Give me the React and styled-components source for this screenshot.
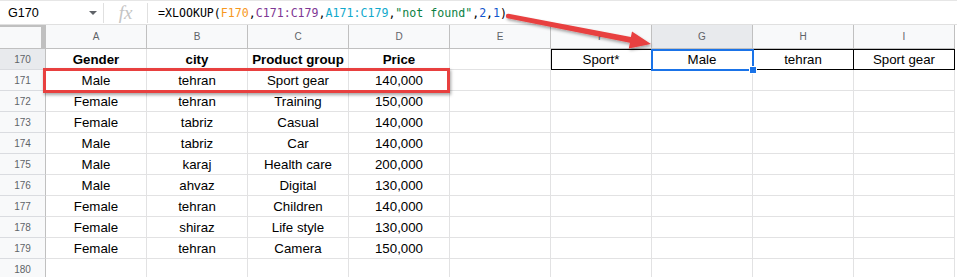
import styled, { createGlobalStyle, css } from "styled-components";

const GlobalStyle = createGlobalStyle`
  html, body {
    margin: 0;
    padding: 0;
    background: #fff;
    overflow: hidden;
  }
  body {
    font-family: "Liberation Sans", Arial, sans-serif;
  }
`;

const columns = ["A", "B", "C", "D", "E", "F", "G", "H", "I"];

const firstRow = [
  { text: "Gender", bold: true },
  { text: "city", bold: true },
  { text: "Product group", bold: true },
  { text: "Price", bold: true },
  { text: "" },
  { text: "Sport*", boxed: "first" },
  { text: "Male", boxed: true, selected: true },
  { text: "tehran", boxed: true },
  { text: "Sport gear", boxed: true },
];

const data = [
  ["Male", "tehran", "Sport gear", "140,000"],
  ["Female", "tehran", "Training", "150,000"],
  ["Female", "tabriz", "Casual", "140,000"],
  ["Male", "tabriz", "Car", "140,000"],
  ["Male", "karaj", "Health care", "200,000"],
  ["Male", "ahvaz", "Digital", "130,000"],
  ["Female", "tehran", "Children", "140,000"],
  ["Female", "shiraz", "Life style", "130,000"],
  ["Female", "tehran", "Camera", "150,000"],
];

const formula = [
  { t: "=XLOOKUP(", c: "#000" },
  { t: "F170", c: "#f7981d" },
  { t: ",", c: "#000" },
  { t: "C171:C179", c: "#7e3794" },
  { t: ",", c: "#000" },
  { t: "A171:C179", c: "#11a9cc" },
  { t: ",", c: "#000" },
  { t: '"not found"', c: "#0b8043" },
  { t: ",", c: "#000" },
  { t: "2", c: "#1155cc" },
  { t: ",", c: "#000" },
  { t: "1", c: "#1155cc" },
  { t: ")", c: "#000" },
];

const App = () => {
  return (
    <>
      <GlobalStyle />
      <Page>
        <FormulaBar>
          <NameBox>
            <span>G170</span>
            <Caret />
          </NameBox>
          <Divider />
          <Fx>fx</Fx>
          <Divider />
          <Formula>
            {formula.map((p, i) => (
              <Token key={i} $color={p.c}>{p.t}</Token>
            ))}
          </Formula>
        </FormulaBar>

        <Row>
          <Corner />
          {columns.map((c) => (
            <ColHeader key={c} $active={c === "G"}>{c}</ColHeader>
          ))}
        </Row>

        <Row>
          <RowHeader $active>170</RowHeader>
          {firstRow.map((cell, i) => (
            <Cell key={i} $bold={cell.bold} $boxed={cell.boxed} $selected={cell.selected}>
              {cell.text}
            </Cell>
          ))}
        </Row>

        {data.map((r, i) => (
          <Row key={i} $highlight={i === 0}>
            <RowHeader>{171 + i}</RowHeader>
            {r.map((v, j) => (
              <Cell key={j}>{v}</Cell>
            ))}
            {[0, 1, 2, 3, 4].map((k) => (
              <Cell key={"e" + k} />
            ))}
          </Row>
        ))}

        <Row>
          <RowHeader>180</RowHeader>
          {columns.map((c) => (
            <Cell key={c} />
          ))}
        </Row>

        <Arrow viewBox="0 0 957 277">
          <defs>
            <filter id="shadow" x="-10%" y="-50%" width="120%" height="200%">
              <feDropShadow dx="1" dy="2" stdDeviation="1.4" floodColor="#000" floodOpacity="0.35" />
            </filter>
          </defs>
          <g filter="url(#shadow)" fill="#e8403f">
            <polygon points="508.5,13.8 630.9,37.1 632,31.4 651,44 628.8,48.5 629.9,42.8 507.5,18.2" />
            <circle cx="508" cy="16" r="2.2" />
          </g>
        </Arrow>
      </Page>
    </>
  );
};

export default App;

const Page = styled.div`
  position: relative;
  width: 957px;
  height: 277px;
  overflow: hidden;
  background: #fff;
`;

const FormulaBar = styled.div`
  display: flex;
  align-items: center;
  height: 23px;
  border-top: 1px solid #e6e6e6;
  border-bottom: 1px solid #e0e0e0;
`;

const NameBox = styled.div`
  width: 103px;
  box-sizing: border-box;
  display: flex;
  align-items: center;
  justify-content: space-between;
  padding: 0 6px 0 8px;
  font-size: 12.6px;
  color: #000;
`;

const Caret = styled.span`
  width: 0;
  height: 0;
  border-left: 4px solid transparent;
  border-right: 4px solid transparent;
  border-top: 4px solid #5f6368;
`;

const Divider = styled.div`
  width: 1px;
  height: 20px;
  background: #e0e0e0;
`;

const Fx = styled.div`
  width: 43px;
  text-align: center;
  font-family: "Liberation Serif", "Times New Roman", serif;
  font-style: italic;
  font-size: 19px;
  color: #c4c4c4;
  line-height: 20px;
`;

const Formula = styled.div`
  padding-left: 10px;
  font-family: "DejaVu Sans Mono", "Liberation Mono", monospace;
  font-size: 11.6px;
  white-space: pre;
`;

const Token = styled.span`
  color: ${(p) => p.$color};
`;

const Row = styled.div`
  position: relative;
  display: grid;
  grid-template-columns: 46px repeat(9, 101px);

  ${(p) =>
    p.$highlight &&
    css`
      &::after {
        content: "";
        position: absolute;
        left: 43px;
        top: -2px;
        width: 407px;
        height: 25px;
        box-sizing: border-box;
        border: 3px solid #e8403f;
        box-shadow: 1px 2px 3px rgba(0, 0, 0, 0.35);
        z-index: 3;
      }
    `}
`;

const Corner = styled.div`
  height: 24px;
  box-sizing: border-box;
  background: #f8f9fa;
  border-right: 1px solid #c0c0c0;
  border-bottom: 1px solid #c0c0c0;
  box-shadow: inset 0 2px 0 #c0c0c0, inset -4px 0 0 #c0c0c0;
`;

const ColHeader = styled.div`
  height: 24px;
  box-sizing: border-box;
  display: flex;
  align-items: center;
  justify-content: center;
  background: ${(p) => (p.$active ? "#e8eaed" : "#f8f9fa")};
  border-right: 1px solid #c0c0c0;
  border-bottom: 1px solid #c0c0c0;
  font-size: 10px;
  color: #5f6368;
`;

const RowHeader = styled.div`
  height: 21px;
  box-sizing: border-box;
  display: flex;
  align-items: center;
  justify-content: center;
  background: ${(p) => (p.$active ? "#e8eaed" : "#f8f9fa")};
  border-right: 1px solid #c0c0c0;
  border-bottom: 1px solid #dadce0;
  font-size: 10px;
  color: #5f6368;
`;

const Cell = styled.div`
  position: relative;
  height: 21px;
  box-sizing: border-box;
  display: flex;
  align-items: center;
  justify-content: center;
  padding: 0 3px;
  border-right: 1px solid #e2e2e3;
  border-bottom: 1px solid #e2e2e3;
  font-size: 13.3px;
  font-weight: ${(p) => (p.$bold ? 700 : 400)};
  color: #000;
  white-space: nowrap;

  ${(p) =>
    p.$boxed &&
    css`
      border-right-color: #000;
      border-bottom-color: #000;
      box-shadow: ${p.$boxed === "first" ? "inset 1px 1px 0 #000" : "inset 0 1px 0 #000"};
    `}

  ${(p) =>
    p.$selected &&
    css`
      &::after {
        content: "";
        position: absolute;
        top: 0;
        left: -1px;
        right: -2px;
        bottom: -2px;
        border: 2px solid #1a73e8;
        z-index: 2;
      }
      &::before {
        content: "";
        position: absolute;
        right: -5px;
        bottom: -5px;
        width: 6px;
        height: 6px;
        background: #1a73e8;
        border: 1px solid #fff;
        z-index: 3;
      }
    `}
`;

const Arrow = styled.svg`
  position: absolute;
  left: 0;
  top: 0;
  width: 957px;
  height: 277px;
  pointer-events: none;
  z-index: 5;
`;
